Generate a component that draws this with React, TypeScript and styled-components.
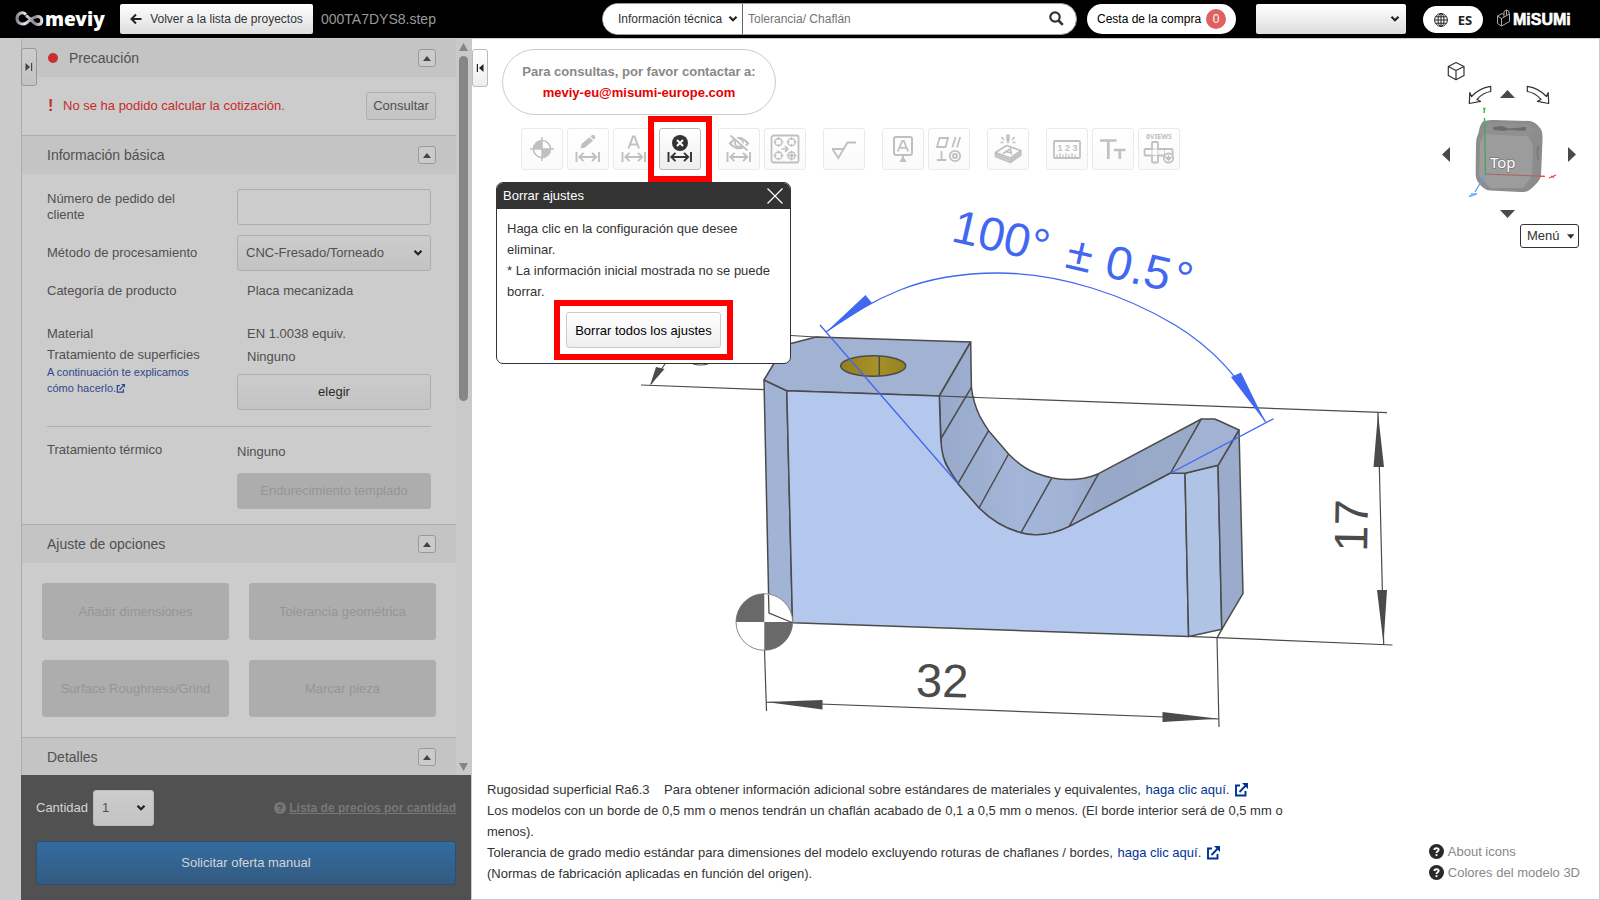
import React from "react";
import styled, { createGlobalStyle, css } from "styled-components";

const GlobalStyle = createGlobalStyle`
  *, *::before, *::after { box-sizing: border-box; }
  body {
    margin: 0;
    background: #fff;
    color: #333;
    font-family: "Liberation Sans", Arial, sans-serif;
    font-size: 13px;
    line-height: 20px;
  }
  button, input, select { font: inherit; color: inherit; margin: 0; }
  a { text-decoration: none; }
`;

const Page = styled.div`
  display: flex;
  flex-direction: column;
  height: 100vh;
`;

/* ---------- top bar ---------- */

const TopBar = styled.header`
  display: flex;
  align-items: center;
  height: 39px;
  flex: none;
  padding: 0 27px 0 15px;
  background: #000;
  border-bottom: 1px solid #ccc;
`;

const Brand = styled.a`
  display: flex;
  align-items: center;
  gap: 1px;
  width: 105px;
  color: #fff;
  font-family: "Noto Sans", sans-serif;
  font-size: 19px;
  font-weight: 900;
  line-height: 30px;
`;

const BackButton = styled.button`
  display: flex;
  align-items: center;
  justify-content: center;
  gap: 8px;
  width: 193px;
  height: 30px;
  padding: 0;
  border: 0;
  border-radius: 2px;
  background: linear-gradient(#fff, #ddd);
  color: #333;
  font-size: 12px;
`;

const FileName = styled.span`
  margin-left: 8px;
  color: #999;
  font-size: 14px;
`;

const Search = styled.form`
  display: flex;
  align-items: center;
  width: 475px;
  height: 32px;
  margin-left: auto;
  margin-right: 10px;
  border: 1px solid #999;
  border-radius: 16px;
  background: #fff;
  font-size: 12px;
  overflow: hidden;
`;

const SearchField = styled.input`
  flex: 1;
  min-width: 0;
  padding: 0 5px;
  border: 0;
  outline: 0;
  background: none;
  &::placeholder { color: #757575; opacity: 1; }
`;

const SearchButton = styled.button`
  display: flex;
  padding: 0 12px 2px;
  border: 0;
  background: none;
  color: #333;
`;

const Cart = styled.a`
  display: flex;
  align-items: center;
  gap: 5px;
  width: 149px;
  height: 30px;
  padding: 0 0 1px 10px;
  margin-right: 20px;
  border-radius: 15px;
  background: #fff;
  color: #000;
  font-size: 12px;
`;

const CartCount = styled.span`
  width: 20px;
  height: 20px;
  border-radius: 50%;
  background: #e06060;
  color: #fff;
  text-align: center;
`;

const Language = styled.button`
  display: flex;
  align-items: center;
  justify-content: center;
  gap: 10px;
  width: 60px;
  height: 27px;
  margin: 0 14px 0 17px;
  padding: 2px 0 0;
  border: 0;
  border-radius: 14px;
  background: #fff;
  color: #222;
  font-family: "Noto Sans", sans-serif;
  font-size: 13px;
  font-weight: 700;
`;

/* ---------- drop-downs ---------- */

type Look = "plain" | "flat" | "header" | "quantity";

const looks = {
  plain: css`width: 140px; height: 30px; padding-left: 15px; border: 0; border-right: 1px solid #666; background: #fff;`,
  flat: css`width: 100%; height: 36px; padding-left: 8px; border: 1px solid #adadad; border-radius: 3px; background: linear-gradient(#ccc, #c3c3c3);`,
  header: css`width: 150px; height: 30px; border: 0; border-radius: 2px; background: linear-gradient(#fff, #ddd);`,
  quantity: css`width: 61px; height: 36px; padding-left: 8px; border: 1px solid #bbb; border-radius: 3px; background: linear-gradient(#ccc, #c3c3c3);`,
};

const arrowGap: Record<Look, number> = { plain: 5, flat: 8, header: 6, quantity: 8 };

const SelectWrap = styled.span<{ $look: Look }>`
  position: relative;
  display: inline-flex;
  align-items: center;
  width: ${(p) => (p.$look === "flat" ? "100%" : "auto")};
  svg {
    position: absolute;
    right: ${(p) => arrowGap[p.$look]}px;
    pointer-events: none;
  }
`;

const NativeSelect = styled.select<{ $look: Look }>`
  appearance: none;
  outline: 0;
  ${(p) => looks[p.$look]}
`;

function DropDown({ look, options, label, id }: { look: Look; options: string[]; label?: string; id?: string }) {
  return (
    <SelectWrap $look={look}>
      <NativeSelect $look={look} aria-label={label} id={id}>
        {options.map((o) => (
          <option key={o}>{o}</option>
        ))}
      </NativeSelect>
      <svg width="10" height="8" viewBox="0 0 10 8" fill="none" stroke="#222" strokeWidth="2.2">
        <path d="M1.5 1.8 5 5.3 8.500 1.800" />
      </svg>
    </SelectWrap>
  );
}

/* ---------- side panel ---------- */

const Body = styled.div`
  display: flex;
  flex: 1;
  min-height: 0;
`;

const Gutter = styled.div`
  width: 21px;
  flex: none;
  background: #cbcbcb;
`;

const Panel = styled.aside`
  position: relative;
  display: flex;
  flex-direction: column;
  width: 451px;
  flex: none;
  background: #ccc;
  color: #505050;
`;

const EdgeTab = styled.button<{ $dim?: boolean }>`
  position: absolute;
  top: ${(p) => (p.$dim ? 9 : 10)}px;
  left: 0;
  z-index: 1;
  display: flex;
  align-items: center;
  justify-content: center;
  width: 16px;
  height: 38px;
  padding: 0;
  border: 1px solid ${(p) => (p.$dim ? "#999" : "#bbb")};
  border-radius: 3px;
  background: ${(p) => (p.$dim ? "linear-gradient(#ccc, #c3c3c3)" : "linear-gradient(#fff, #eee)")};
`;

const ScrollArea = styled.div`
  display: flex;
  flex: 1;
  min-height: 0;
  border-left: 1px solid #adadad;
`;

const Sections = styled.div`
  flex: 1;
  min-width: 0;
  overflow: hidden;
`;

const ScrollBar = styled.div`
  display: flex;
  flex-direction: column;
  align-items: center;
  width: 16px;
  padding: 4px 1px 4px 0;
  background: #c9c9c9;
`;

const ScrollThumb = styled.div`
  width: 9px;
  height: 345px;
  margin: 5px 0 auto;
  border-radius: 5px;
  background: #868686;
`;

const Section = styled.section`
  & + & { border-top: 1px solid #adadad; }
`;

const SectionHead = styled.h2`
  display: flex;
  align-items: center;
  height: 38px;
  margin: 0;
  padding: 0 20px 0 25px;
  background: #c4c4c4;
  font-size: 14px;
  font-weight: 400;
`;

const AlertDot = styled.span`
  width: 10px;
  height: 10px;
  margin: 0 11px 0 1px;
  border-radius: 50%;
  background: #c92f2f;
`;

const CollapseButton = styled.button`
  display: flex;
  align-items: center;
  justify-content: center;
  width: 18px;
  height: 18px;
  margin-left: auto;
  padding: 0;
  border: 1px solid #999;
  border-radius: 3px;
  background: #cbcbcb;
`;

const Alert = styled.div`
  display: flex;
  align-items: center;
  height: 58px;
  padding: 0 20px 0 25px;
  color: #c92a2a;
`;

const AlertMark = styled.strong`
  width: 16px;
  padding-left: 1px;
  font-size: 16px;
`;

const Button = styled.button<{ $tall?: boolean }>`
  width: 100%;
  height: ${(p) => (p.$tall ? 57 : 36)}px;
  padding: 0;
  border: 1px solid #adadad;
  border-radius: 3px;
  background: linear-gradient(#ccc, #c3c3c3);
  color: #2b2b2b;
  &:disabled { background: #adadad; color: #959595; }
`;

const AskButton = styled(Button)`
  width: 70px;
  height: 28px;
  margin-left: auto;
  color: #505050;
`;

const Fields = styled.div`
  padding: 15px 25px;
`;

const Field = styled.div<{ $top?: number; $center?: boolean }>`
  display: grid;
  grid-template-columns: 190px 1fr;
  align-items: ${(p) => (p.$center ? "center" : "start")};
  margin-top: ${(p) => p.$top ?? 0}px;
`;

const FieldLabel = styled.label`
  display: block;
  max-width: 160px;
  line-height: 16px;
  padding-top: 2px;
`;

const Value = styled.div<{ $indent?: boolean }>`
  padding-left: ${(p) => (p.$indent ? 10 : 0)}px;
`;

const Stack = styled.div<{ $gap: number; $top: number }>`
  display: flex;
  flex-direction: column;
  gap: ${(p) => p.$gap}px;
  padding-top: ${(p) => p.$top}px;
`;

const TightLabel = styled.div`
  line-height: 18px;
`;

const HelpLink = styled.a`
  max-width: 160px;
  color: #2c4a8a;
  font-size: 11px;
  line-height: 16px;
  svg { vertical-align: -1px; }
`;

const TextBox = styled.input`
  width: 100%;
  height: 36px;
  border: 1px solid #adadad;
  border-radius: 3px;
  background: #ccc;
`;

const Rule = styled.hr`
  height: 1px;
  margin: 16px 0 13px;
  border: 0;
  background: #adadad;
`;

const OptionGrid = styled.div`
  display: grid;
  grid-template-columns: 1fr 1fr;
  gap: 20px;
  padding: 20px;
`;

const OrderBar = styled.footer`
  display: flex;
  flex-direction: column;
  gap: 15px;
  margin-right: 1px;
  padding: 15px;
  background: #515151;
  color: #d4d4d4;
  font-weight: 400;
`;

const OrderRow = styled.div`
  display: flex;
  align-items: center;
  gap: 5px;
  select { color: #505050; }
`;

const PriceLink = styled.a`
  display: flex;
  align-items: center;
  gap: 3px;
  margin-left: auto;
  color: #777;
  font-size: 12px;
  font-weight: 700;
  span { text-decoration: underline; }
`;

const SubmitButton = styled.button`
  height: 44px;
  border: 1px solid #2a4f72;
  border-radius: 3px;
  background: linear-gradient(#336ca0, #335b80);
  color: #d4d4d4;
`;

const Triangle = ({ dir, w, h, color }: { dir: "up" | "down" | "left" | "right"; w: number; h: number; color: string }) => {
  const d = {
    up: `M0 ${h}L${w / 2} 0L${w} ${h}Z`,
    down: `M0 0L${w / 2} ${h}L${w} 0Z`,
    left: `M${w} 0L0 ${h / 2}L${w} ${h}Z`,
    right: `M0 0L${w} ${h / 2}L0 ${h}Z`,
  }[dir];
  return (
    <svg width={w} height={h} viewBox={`0 0 ${w} ${h}`} fill={color}>
      <path d={d} />
    </svg>
  );
};

const ExternalIcon = ({ size }: { size: number }) => (
  <svg width={size} height={size} viewBox="0 0 14 14" fill="none" stroke="currentColor" strokeWidth="1.9">
    <path d="M6 2.500H2V12.500H11.500V8" />
    <path d="M5.500 9 11.800 2.500" />
    <path d="M8 0H14V6Z" fill="currentColor" stroke="none" />
  </svg>
);

const HelpIcon = ({ size, back, mark }: { size: number; back: string; mark: string }) => (
  <svg width={size} height={size} viewBox="0 0 16 16">
    <circle cx="8" cy="8" r="8" fill={back} />
    <path d="M5.700 6.500C5.700 3.800 10.300 3.900 10.300 6.200 10.300 7.800 8 7.700 8 9.500" fill="none" stroke={mark} strokeWidth="2" />
    <circle cx="8" cy="11.800" r="1.200" fill={mark} />
  </svg>
);

function Heading({ title, dot }: { title: string; dot?: boolean }) {
  return (
    <SectionHead>
      {dot && <AlertDot />}
      {title}
      <CollapseButton aria-label={`Contraer ${title}`}>
        <Triangle dir="up" w={8} h={5} color="#444" />
      </CollapseButton>
    </SectionHead>
  );
}

function SidePanel() {
  return (
    <Panel>
      <EdgeTab $dim aria-label="Expandir panel">
        <svg width="8" height="10" viewBox="0 0 8 10" fill="#444">
          <path d="M0.500 1 5 5 0.500 9ZM6 1H7.200V9H6Z" />
        </svg>
      </EdgeTab>
      <ScrollArea>
        <Sections>
          <Section>
            <Heading title="Precaución" dot />
            <Alert>
              <AlertMark>!</AlertMark>
              No se ha podido calcular la cotización.
              <AskButton>Consultar</AskButton>
            </Alert>
          </Section>
          <Section>
            <Heading title="Información básica" />
            <Fields>
              <Field>
                <FieldLabel htmlFor="order">Número de pedido del cliente</FieldLabel>
                <TextBox id="order" />
              </Field>
              <Field $top={10} $center>
                <label htmlFor="method">Método de procesamiento</label>
                <DropDown look="flat" id="method" options={["CNC-Fresado/Torneado"]} />
              </Field>
              <Field $top={10}>
                <div>Categoría de producto</div>
                <Value $indent>Placa mecanizada</Value>
              </Field>
              <Field $top={23}>
                <div>Material</div>
                <Value $indent>EN 1.0038 equiv.</Value>
              </Field>
              <Field>
                <Stack $gap={0} $top={2}>
                  <TightLabel>Tratamiento de superficies</TightLabel>
                  <HelpLink href="#superficies">
                    A continuación te explicamos cómo hacerlo.
                    <ExternalIcon size={9} />
                  </HelpLink>
                </Stack>
                <Stack $gap={7} $top={3}>
                  <Value $indent>Ninguno</Value>
                  <Button>elegir</Button>
                </Stack>
              </Field>
              <Rule />
              <Field>
                <div>Tratamiento térmico</div>
                <Stack $gap={11} $top={2}>
                  <Value>Ninguno</Value>
                  <Button disabled>Endurecimiento templado</Button>
                </Stack>
              </Field>
            </Fields>
          </Section>
          <Section>
            <Heading title="Ajuste de opciones" />
            <OptionGrid>
              {["Añadir dimensiones", "Tolerancia geométrica", "Surface Roughness/Grind", "Marcar pieza"].map((t) => (
                <Button key={t} $tall disabled>
                  {t}
                </Button>
              ))}
            </OptionGrid>
          </Section>
          <Section>
            <Heading title="Detalles" />
          </Section>
        </Sections>
        <ScrollBar>
          <Triangle dir="up" w={9} h={8} color="#868686" />
          <ScrollThumb />
          <Triangle dir="down" w={9} h={8} color="#868686" />
        </ScrollBar>
      </ScrollArea>
      <OrderBar>
        <OrderRow>
          <label htmlFor="qty">Cantidad</label>
          <DropDown look="quantity" id="qty" options={["1"]} />
          <PriceLink href="#precios">
            <HelpIcon size={12} back="#777" mark="#515151" />
            <span>Lista de precios por cantidad</span>
          </PriceLink>
        </OrderRow>
        <SubmitButton>Solicitar oferta manual</SubmitButton>
      </OrderBar>
    </Panel>
  );
}

/* ---------- viewer ---------- */

const Viewer = styled.main`
  position: relative;
  display: flex;
  flex-direction: column;
  flex: 1;
  min-width: 0;
  border-right: 1px solid #ccc;
  border-bottom: 1px solid #ccc;
`;

const ModelCanvas = styled.svg`
  position: absolute;
  inset: 0;
  width: 100%;
  height: 100%;
`;

const Contact = styled.div`
  position: relative;
  width: 274px;
  height: 66px;
  margin: 10px 0 0 30px;
  padding-top: 11px;
  border: 1px solid #ccc;
  border-radius: 33px;
  color: #888;
  font-weight: 700;
  line-height: 21px;
  text-align: center;
  a { display: block; color: #e60000; }
`;

const ToolBar = styled.div`
  position: relative;
  display: flex;
  gap: 17px;
  margin: 13px 0 0 49px;
`;

const ToolGroup = styled.div`
  display: flex;
  gap: 4px;
`;

const ToolButton = styled.button<{ $active?: boolean }>`
  display: flex;
  width: 42px;
  height: 42px;
  padding: 0;
  border: 1px solid ${(p) => (p.$active ? "#bbb" : "#eaeaea")};
  border-radius: 3px;
  background: ${(p) => (p.$active ? "linear-gradient(#fff, #eee)" : "linear-gradient(#fff, #fafafa)")};
  color: ${(p) => (p.$active ? "#333" : "#c0c0c0")};
`;

const ToolSlot = styled.div`
  position: relative;
`;

const Highlight = styled.div<{ $x: number; $y: number }>`
  position: absolute;
  inset: ${(p) => `-${p.$y}px -${p.$x}px`};
  border: 6px solid #f00;
  pointer-events: none;
`;

const Dialog = styled.section`
  position: relative;
  width: 295px;
  margin: 12px 0 0 24px;
  border: 1px solid #333;
  border-radius: 7px;
  background: #fff;
  overflow: hidden;
`;

const DialogHead = styled.header`
  display: flex;
  align-items: center;
  justify-content: space-between;
  height: 26px;
  padding: 0 7px 0 6px;
  background: #333;
  color: #fff;
`;

const CloseButton = styled.button`
  display: flex;
  padding: 0;
  border: 0;
  background: none;
  color: #fff;
`;

const DialogText = styled.p`
  margin: 0;
  padding: 9px 10px 10px;
  line-height: 21px;
`;

const DialogAction = styled.div`
  position: relative;
  width: 155px;
  margin: 0 auto 15px;
`;

const ClearButton = styled.button`
  width: 155px;
  height: 36px;
  padding: 1px 0 0;
  border: 1px solid #ccc;
  border-radius: 3px;
  background: linear-gradient(#fff, #eee);
  color: #000;
`;

const ViewControls = styled.div`
  position: absolute;
  top: 19px;
  right: 20px;
  display: flex;
  flex-direction: column;
  align-items: flex-end;
`;

const MenuButton = styled.button`
  display: flex;
  align-items: center;
  gap: 7px;
  width: 59px;
  height: 24px;
  padding: 0 4px 0 6px;
  border: 1px solid #333;
  border-radius: 3px;
  background: #fff;
`;

const Foot = styled.div`
  position: relative;
  display: flex;
  align-items: flex-end;
  justify-content: space-between;
  margin-top: auto;
  padding: 0 19px 15px 15px;
  line-height: 21px;
`;

const Notes = styled.div`
  max-width: 810px;
  p { margin: 0; white-space: pre-wrap; }
  a { padding-left: 1px; color: #003399; }
  svg { margin-left: 5px; vertical-align: -3px; }
`;

const HelpLinks = styled.nav`
  display: flex;
  flex-direction: column;
  padding-bottom: 1px;
  a {
    display: flex;
    align-items: center;
    gap: 4px;
    color: #888;
  }
`;

/* toolbar icons, drawn on a 40 x 40 grid */

const DimArrow = () => (
  <path
    d="M8.500 23V33M31 23V33M11 28H28.500M15.500 23.800 11.300 28 15.500 32.200M24 23.800 28.200 28 24 32.200"
    fill="none"
    stroke="currentColor"
    strokeWidth="1.9"
  />
);

const Bore = ({ cx, cy }: { cx: number; cy: number }) => (
  <>
    <circle cx={cx} cy={cy} r="3.600" />
    <path d={`M${cx - 5} ${cy}H${cx - 2}M${cx + 2} ${cy}H${cx + 5}M${cx} ${cy - 5}V${cy - 2}M${cx} ${cy + 2}V${cy + 5}`} strokeWidth="1" />
  </>
);

const icons: Record<string, React.ReactNode> = {
  Origen: (
    <g>
      <circle cx="20" cy="20" r="8.500" fill="none" stroke="currentColor" strokeWidth="1.600" />
      <path d="M20 20V11.500A8.500 8.500 0 0 0 11.500 20ZM20 20V28.500A8.500 8.500 0 0 0 28.500 20Z" fill="currentColor" />
      <path d="M20 8V32M8 20H32" stroke="currentColor" strokeWidth="1.500" />
    </g>
  ),
  "Editar dimensión": (
    <g>
      <path d="M12.500 19.500 13.700 14.800 21.500 8.200 25 11.800 17.200 18.500ZM22.500 7.300 24.300 5.900Q25.500 5.500 26.600 6.700 27.800 8 27 9.300L25.800 10.800Z" fill="currentColor" />
      <DimArrow />
    </g>
  ),
  "Texto de dimensión": (
    <g>
      <path d="M14.500 19.500 19 7.500H20.500L25 19.500M16 15.500H23.500" fill="none" stroke="currentColor" strokeWidth="2" />
      <DimArrow />
    </g>
  ),
  "Borrar ajustes": (
    <g>
      <circle cx="20" cy="14" r="8" fill="currentColor" />
      <path d="M17 11 23 17M23 11 17 17" stroke="#fff" strokeWidth="2" />
      <DimArrow />
    </g>
  ),
  "Ocultar dimensión": (
    <g>
      <path d="M11 14.500Q20 3.500 29 14.500 20 24 11 14.500Z" fill="none" stroke="currentColor" strokeWidth="2" />
      <circle cx="20" cy="13.700" r="4" fill="none" stroke="currentColor" strokeWidth="1.800" />
      <path d="M12.500 5.500 29.500 21" stroke="#fff" strokeWidth="2.500" />
      <path d="M11.500 6.500 28.500 21.500" stroke="currentColor" strokeWidth="1.800" />
      <DimArrow />
    </g>
  ),
  "Agrupar agujeros": (
    <g fill="none" stroke="currentColor" strokeWidth="1.500">
      <rect x="6.500" y="6.500" width="27" height="27" rx="2" strokeWidth="1.800" />
      <Bore cx={13.5} cy={13} />
      <Bore cx={26.5} cy={13} />
      <Bore cx={13.5} cy={26.5} />
      <Bore cx={26.5} cy={26.5} />
      <circle cx="26.500" cy="26.500" r="1.300" fill="currentColor" />
      <path d="M16.500 20H22.500M20 17.200 22.800 20 20 22.800" strokeWidth="1.700" />
    </g>
  ),
  Rugosidad: <path d="M8 20H20.500M8.500 20 14.300 29 23.500 13.500H32" fill="none" stroke="currentColor" strokeWidth="1.900" />,
  Referencia: (
    <g fill="none" stroke="currentColor" strokeWidth="2">
      <rect x="11" y="8" width="18" height="18" rx="2" />
      <path d="M14.800 22.500 19.200 12H20.800L25.200 22.500M16.500 18.800H23.500" strokeWidth="1.800" />
      <path d="M20 26V29" />
      <path d="M20 27.500 23.800 33H16.200Z" fill="currentColor" stroke="none" />
    </g>
  ),
  "Tolerancia geométrica": (
    <g fill="none" stroke="currentColor" strokeWidth="1.800">
      <path d="M10.500 9H19L16.500 18H8ZM26.500 8 23.300 18.500M31.200 8 28 18.500M12.500 22V31M7.800 31H17.300" />
      <circle cx="26" cy="27" r="5.200" />
      <circle cx="26" cy="27" r="2" />
    </g>
  ),
  Grabado: (
    <g fill="none" stroke="currentColor" strokeWidth="1.700">
      <path d="M7.500 23.500 18.500 16.500 32.800 21.500 22.500 29ZM7.500 23.500V27.500L22.500 33.500 32.800 26V21.500M22.500 29V33.500" strokeLinejoin="round" />
      <path d="M8 25.500 22.500 31.300 32.500 24" strokeWidth="2.200" />
      <path d="M15 24.500 22.500 19.800 23.500 25.500M18 22.800 23 23.800" strokeWidth="1.500" />
      <path d="M18.300 5.500H21.700V11L20 15 18.300 11Z" fill="currentColor" stroke="none" />
      <path d="M13.500 8 16 11M26.500 8 24 11M12.500 13.500H15.500M24.500 13.500H27.500" strokeWidth="1.500" />
    </g>
  ),
  Medidas: (
    <g fill="none" stroke="currentColor" strokeWidth="1.800">
      <rect x="7" y="12" width="26" height="17" rx="1" />
      <path d="M10 28V25.500M13 28V24M16 28V25.500M19 28V24M22 28V25.500M25 28V24M28 28V25.500" strokeWidth="1.200" />
      <text x="20.500" y="22" fontSize="9" fontWeight="700" textAnchor="middle" fill="currentColor" stroke="none">
        1 2 3
      </text>
    </g>
  ),
  "Tamaño de texto": <path d="M7 11.500H23.500M15.300 11.500V30M21 21H32.500M26.800 21V30" fill="none" stroke="currentColor" strokeWidth="2.700" />,
  "Seis vistas": (
    <g fill="none" stroke="currentColor" strokeWidth="1.800">
      <text x="20" y="10" fontFamily="Noto Sans" fontSize="7" fontWeight="700" textAnchor="middle" fill="currentColor" stroke="none">
        6VIEWS
      </text>
      <path d="M13 20V14Q13 13 14 13H18Q19 13 19 14V20H32.500Q33.500 20 33.500 21V26.500H19V32.500Q19 33.500 18 33.500H14Q13 33.500 13 32.500V26.500H6.500Q5.500 26.500 5.500 25.500V21Q5.500 20 6.500 20Z" />
      <path d="M13 20V26.500H19V20ZM25.500 20V26.500" strokeWidth=".8" />
      <circle cx="29.500" cy="29" r="4.700" fill="#fff" />
      <path d="M29.500 25.800V30M27 28.500 29.500 31.500 32 28.500Z" strokeWidth="1.400" />
    </g>
  ),
};

const toolGroups = [
  ["Origen", "Editar dimensión", "Texto de dimensión", "Borrar ajustes"],
  ["Ocultar dimensión", "Agrupar agujeros"],
  ["Rugosidad"],
  ["Referencia", "Tolerancia geométrica"],
  ["Grabado"],
  ["Medidas", "Tamaño de texto", "Seis vistas"],
];

function Model() {
  const edge = "#4b4b4b";
  const blue = "#4267f0";
  return (
    <ModelCanvas viewBox="472 39 1127 860" fontFamily="Liberation Sans, Arial, sans-serif" fontSize="47">
      <defs>
        <linearGradient id="curve" x1="0" x2="1">
          <stop offset="0" stopColor="#98a9ca" />
          <stop offset=".3" stopColor="#a3b6d9" />
          <stop offset=".5" stopColor="#a1b3d5" />
          <stop offset=".6" stopColor="#98a8c8" />
          <stop offset="1" stopColor="#9aaac9" />
        </linearGradient>
        <linearGradient id="bore" x1="0" x2="1">
          <stop offset="0" stopColor="#927f20" />
          <stop offset=".55" stopColor="#a79129" />
          <stop offset="1" stopColor="#93811f" />
        </linearGradient>
      </defs>
      <g stroke={edge} strokeWidth="1.200" fill="none">
        <path d="M641 385 1387 412.700M791 335.500 832 338M1188 636.300 1392.500 645M1378 413 1383.700 645M764.500 650 766.500 711M766 702 1218.500 719M1217 638 1219 727" />
        <path d="M665 364 651 384M693 364Q701 366 708 364" />
      </g>
      <path d="M656 367 664.500 369 650 385.500ZM1378 413 1373.500 467H1384ZM1383.500 644 1377 590H1387ZM766 702 822.500 700V709.500ZM1218.500 718.700 1162.500 712V722Z" fill={edge} />
      <g stroke={edge} strokeWidth="1.500" strokeLinejoin="round">
        <path d="M764 380 786.800 390.700 792.500 622.700 769 613Z" fill="#a2b4d5" />
        <path d="M764 380 773.600 364 790 343.700 816 337 970.700 342 939.300 396 786.800 390.700Z" fill="#a1b2d2" />
        <path d="M939.300 396 970.700 342 971.400 387.300Q973 402 980 416.700 984 424 988.600 430.700L1008.600 454Q1022 468 1036.400 473.300 1060 482.500 1084 478.300 1092 476.500 1098.600 473.700L1201.400 419 1170.700 473 1069 526.700Q1052 535 1036.800 534.700 1028 535 1021 532.700 998 527 979 508L958 483.700Q944 464 941.500 450Z" fill="url(#curve)" />
        <path d="M786.800 390.700 939.300 396 940.700 439Q942 460 948.600 469L958 483.700 979 508Q998 527 1021 532.700 1028 535 1036.800 534.700 1052 535 1069 526.700L1170.700 473 1185 473.300 1188.600 636.500 792.500 622.700Z" fill="#b3c8ec" />
        <path d="M1185 473.300 1218 465.300 1221.800 629.300 1188.600 636.500Z" fill="#afc3e5" />
        <path d="M1218 465.300 1239 430 1243 593.300 1221.800 629.300Z" fill="#9aabcb" />
        <path d="M1170.700 473 1201.400 419 1214.600 419 1220 421.300 1239 430 1218 465.300 1185 473.300Z" fill="#a1b2d2" />
        <path d="M971.400 387.300 940.700 439M988.600 430.700 958 483.700M1008.600 454 979 508M1051.400 478.700 1021 532.700M1098.600 473.700 1069 526.700M1221.800 629.300 1217 638" fill="none" />
        <ellipse cx="873.200" cy="366" rx="32.500" ry="10.300" fill="url(#bore)" />
        <path d="M879.300 356.500V375.500" />
      </g>
      <path d="M939.300 396 975 397.300" stroke={edge} strokeWidth="1.200" />
      <circle cx="764.300" cy="622" r="28.300" fill="#fff" stroke="#888" />
      <path d="M764.300 622V593.700A28.300 28.300 0 0 0 736 622ZM764.300 622V650.300A28.300 28.300 0 0 0 792.600 622Z" fill="#696969" />
      <path d="M768.500 595 769 613 792 622.500" stroke={edge} fill="none" strokeWidth="1.300" />
      <g fill={edge}>
        <text x="942" y="697" textAnchor="middle" transform="rotate(1 942 697)">
          32
        </text>
        <text transform="translate(1367 552) rotate(-89)">17</text>
      </g>
      <g stroke={blue} strokeWidth="1.300" fill="none">
        <path d="M820 325 958 483.700M1170.700 473 1273.600 418.700" />
        <path d="M826 332C850 315 870 302 900 290 930 278 965 273 998 273 1060 273 1125 295 1175 325 1213 348 1240 378 1265.600 422" />
      </g>
      <path d="M826 332 865.500 295 872 303ZM1265.600 422.500 1231 377 1241 372.500Z" fill={blue} />
      <g fill={blue} transform="translate(950 241) rotate(13)">
        <text x="0">100</text>
        <text x="79">°</text>
        <text x="117">±</text>
        <text x="157">0.5</text>
        <text x="226">°</text>
      </g>
    </ModelCanvas>
  );
}

function ViewCube() {
  return (
    <svg width="149" height="166" viewBox="1430 58 149 166" fill="none">
      <g stroke="#333" strokeWidth="1.200" strokeLinejoin="round">
        <path d="M1456 62.500 1464 66.500V75.500L1456 79.700 1448.300 75.500V66.500ZM1448.300 66.500 1456 70.500 1464 66.500M1456 70.500V79.700" />
        <path d="M1490.700 86.300Q1479 88 1471.500 96.500L1469.800 92.500 1469.300 103.500 1480.500 101.300 1477 99.500Q1483 92.500 1490.700 91.500Z" />
        <path d="M1527.300 86.300Q1539 88 1546.500 96.500L1548.200 92.500 1548.700 103.500 1537.500 101.300 1541 99.500Q1535 92.500 1527.300 91.500Z" />
      </g>
      <path d="M1500 98 1507.500 90 1515 98ZM1500 210 1507.500 218 1515 210ZM1450 147V162L1442 154.500ZM1568 147V162L1576 154.500Z" fill="#4a4a4a" />
      <path d="M1483 121.500Q1487 119.500 1495 120L1530 121Q1535 121.500 1540 128 1543 131 1542.500 140L1541 175Q1541 180 1532 188 1528 192.500 1520 192L1490 190.500Q1484 190.500 1478 182 1475.500 179 1475.700 172L1476 143Q1476 138 1478.500 133 1480 124 1483 121.500Z" fill="#8c8c8c" />
      <path d="M1484 134 1528 136 1533 145 1532 176 1523 188 1490 188 1479 176 1480 143Z" fill="#9c9c9c" />
      <path d="M1485 123 1530 124 1536 131 1528 136 1484 134 1480 137Z" fill="#909090" />
      <path d="M1493 127.500 1502 126.500 1509 129 1526 127.500 1525 130.500 1510 129.500 1503 130.500 1494 129.500Z" fill="#6b6b6b" stroke="#707070" />
      <path d="M1538.500 146Q1536.500 152 1538.500 160" stroke="#7b7b7b" strokeWidth="2" />
      <path d="M1484.500 118 1485.500 174" stroke="#3fa55a" strokeWidth="1.200" />
      <path d="M1484.500 118 1484.500 124" stroke="#2bc95a" strokeWidth="1.300" />
      <path d="M1483 108.500 1485.500 108.500M1484.500 108.500 1484 113" stroke="#2bc95a" strokeWidth="1.500" />
      <path d="M1485.500 174 1544 176.300" stroke="#b06060" />
      <path d="M1540 176.300H1545M1549 178 1556 175M1551 176 1554 177.500" stroke="#f04848" strokeWidth="1.300" />
      <path d="M1485.500 174 1475 192" stroke="#58a2e6" strokeWidth="1.300" />
      <path d="M1469 196.500 1476 194M1471 194H1477" stroke="#7fb8f0" strokeWidth="2" />
      <text x="1490" y="168" fontFamily="Noto Sans" fontSize="15" fill="#fff" stroke="#777" strokeWidth="1.500" paintOrder="stroke">
        Top
      </text>
    </svg>
  );
}

export default function App() {
  return (
    <Page>
      <GlobalStyle />
      <TopBar>
        <Brand href="#inicio">
          <svg width="29" height="18" viewBox="0 0 29 18" fill="none">
            <defs>
              <linearGradient id="loop" x1="0" x2="1">
                <stop offset="0" stopColor="#8a8590" />
                <stop offset=".3" stopColor="#e8e6ea" />
                <stop offset=".7" stopColor="#8d8890" />
                <stop offset="1" stopColor="#ddd" />
              </linearGradient>
            </defs>
            <path d="M11 4.500C7 1 2 3.500 2 8.500 2 14 8 15.500 12 12.500 16 9.500 19 6 23.500 6.500 28 7.500 28 14.500 23 14.500 18.500 14.500 17 9 11 5.500" stroke="url(#loop)" strokeWidth="3" />
          </svg>
          meviy
        </Brand>
        <BackButton>
          <svg width="12" height="12" viewBox="0 0 12 12" fill="none" stroke="#222" strokeWidth="2">
            <path d="M11.500 6H2M6 1.500 1.500 6 6 10.500" />
          </svg>
          Volver a la lista de proyectos
        </BackButton>
        <FileName>000TA7DYS8.step</FileName>
        <Search>
          <DropDown look="plain" label="Tipo de búsqueda" options={["Información técnica"]} />
          <SearchField aria-label="Buscar" placeholder="Tolerancia/ Chaflán" />
          <SearchButton type="button" aria-label="Buscar">
            <svg width="15" height="15" viewBox="0 0 15 15" fill="none" stroke="currentColor" strokeWidth="2.200">
              <circle cx="6" cy="6" r="4.700" />
              <path d="M9.500 9.500 13.800 13.800" strokeWidth="2.600" />
            </svg>
          </SearchButton>
        </Search>
        <Cart href="#cesta">
          Cesta de la compra <CartCount>0</CartCount>
        </Cart>
        <DropDown look="header" label="Usuario" options={[""]} />
        <Language>
          <svg width="14" height="14" viewBox="0 0 14 14" fill="none" stroke="#222">
            <circle cx="7" cy="7" r="6.400" />
            <ellipse cx="7" cy="7" rx="3" ry="6.400" />
            <path d="M7 .5V13.500M.5 7H13.500M1.500 3.800H12.500M1.500 10.200H12.500" />
          </svg>
          ES
        </Language>
        <svg width="76" height="20" viewBox="0 0 76 20" role="img" aria-label="MiSUMi">
          <g fill="none" stroke="#aaa">
            <path d="M.5 7 4.500 9.500V17L.5 14.500ZM4.500 9.500 12.500 5V12.500L4.500 17M.5 7 5 4.500 7 5.500V2.500L9.500 1 12 2.500V5.200M7 5.500V8M9.500 1V6.500" />
          </g>
          <text x="16" y="16" fontFamily="Liberation Sans Narrow, Liberation Sans, sans-serif" fontSize="16" fontWeight="700" fill="#fff" stroke="#fff" strokeWidth=".6">
            MiSUMi
          </text>
        </svg>
      </TopBar>
      <Body>
        <Gutter />
        <SidePanel />
        <Viewer>
          <Model />
          <EdgeTab aria-label="Contraer panel">
            <svg width="8" height="10" viewBox="0 0 8 10" fill="#222">
              <path d="M7.500 1 3 5 7.500 9ZM.8 1H2V9H.8Z" />
            </svg>
          </EdgeTab>
          <Contact>
            Para consultas, por favor contactar a:
            <a href="mailto:meviy-eu@misumi-europe.com">meviy-eu@misumi-europe.com</a>
          </Contact>
          <ToolBar>
            {toolGroups.map((group) => (
              <ToolGroup key={group[0]}>
                {group.map((name) => {
                  const active = name === "Borrar ajustes";
                  return (
                    <ToolSlot key={name}>
                      <ToolButton aria-label={name} $active={active}>
                        <svg width="40" height="40" viewBox="0 0 40 40">
                          {icons[name]}
                        </svg>
                      </ToolButton>
                      {active && <Highlight $x={11} $y={12} />}
                    </ToolSlot>
                  );
                })}
              </ToolGroup>
            ))}
          </ToolBar>
          <Dialog aria-label="Borrar ajustes">
            <DialogHead>
              Borrar ajustes
              <CloseButton aria-label="Cerrar">
                <svg width="16" height="16" viewBox="0 0 16 16" stroke="currentColor" strokeWidth="1.200">
                  <path d="M.5 .5 15.500 15.500M15.500 .5 .5 15.500" />
                </svg>
              </CloseButton>
            </DialogHead>
            <DialogText>
              Haga clic en la configuración que desee eliminar.
              <br />* La información inicial mostrada no se puede borrar.
            </DialogText>
            <DialogAction>
              <ClearButton>Borrar todos los ajustes</ClearButton>
              <Highlight $x={12} $y={12} />
            </DialogAction>
          </Dialog>
          <ViewControls>
            <ViewCube />
            <MenuButton>
              Menú
              <Triangle dir="down" w={8} h={5} color="#333" />
            </MenuButton>
          </ViewControls>
          <Foot>
            <Notes>
              <p>
                {"Rugosidad superficial Ra6.3\u00a0\u00a0\u00a0 Para obtener información adicional sobre estándares de materiales y equivalentes, "}
                <a href="#materiales">
                  haga clic aquí.
                  <ExternalIcon size={14} />
                </a>
              </p>
              <p>Los modelos con un borde de 0,5 mm o menos tendrán un chaflán acabado de 0,1 a 0,5 mm o menos. (El borde interior será de 0,5 mm o menos).</p>
              <p>
                {"Tolerancia de grado medio estándar para dimensiones del modelo excluyendo roturas de chaflanes / bordes, "}
                <a href="#tolerancias">
                  haga clic aquí.
                  <ExternalIcon size={14} />
                </a>
              </p>
              <p>(Normas de fabricación aplicadas en función del origen).</p>
            </Notes>
            <HelpLinks>
              <a href="#iconos">
                <HelpIcon size={15} back="#2a2a2a" mark="#fff" />
                About icons
              </a>
              <a href="#colores">
                <HelpIcon size={15} back="#2a2a2a" mark="#fff" />
                Colores del modelo 3D
              </a>
            </HelpLinks>
          </Foot>
        </Viewer>
      </Body>
    </Page>
  );
}
